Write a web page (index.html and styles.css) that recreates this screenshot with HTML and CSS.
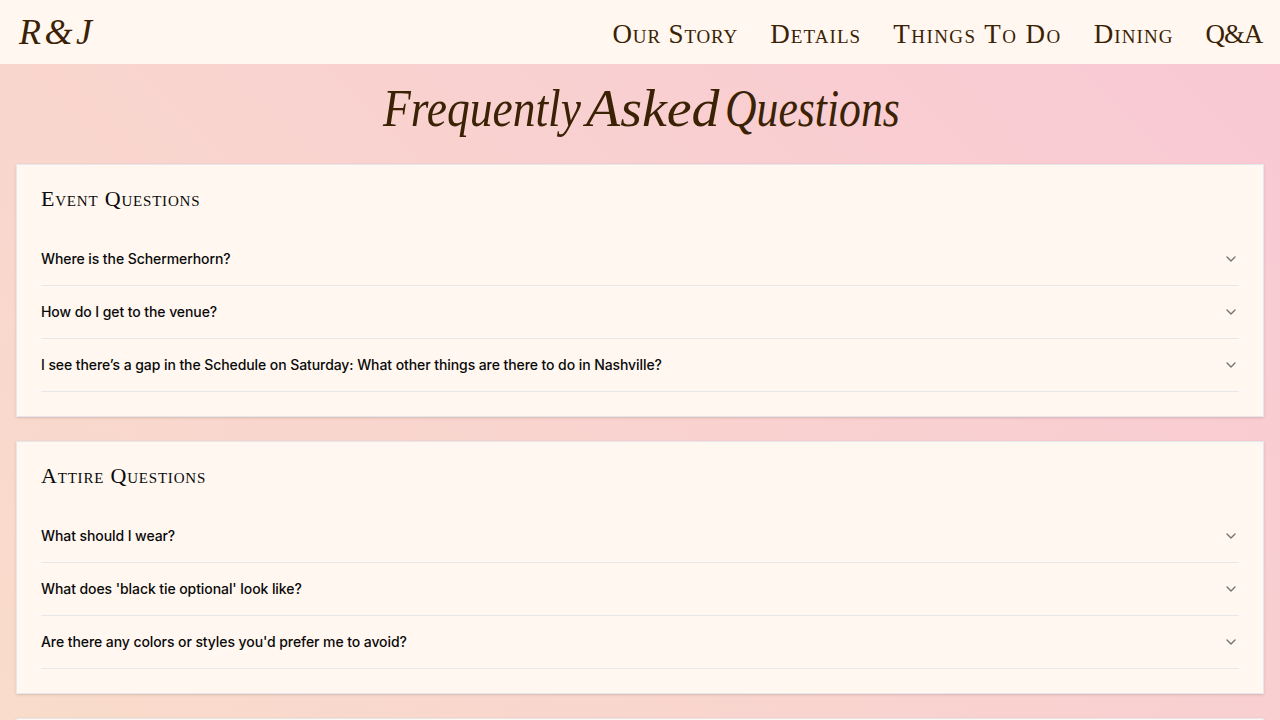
FILE: index.html
```html
<!DOCTYPE html>
<html lang="en">
<head>
<meta charset="utf-8">
<title>R&amp;J – Q&amp;A</title>
<link rel="stylesheet" href="styles.css">
</head>
<body>
<svg class="sprite" aria-hidden="true"><symbol id="chevron" viewBox="0 0 24 24"><path d="m6 9 6 6 6-6" fill="none" stroke="currentColor" stroke-width="2" stroke-linecap="round" stroke-linejoin="round"/></symbol></svg>
<header class="nav">
  <a class="logo">R&amp;J</a>
  <nav class="links">
    <a class="story">Our Story</a><a class="details">Details</a><a class="things">Things To Do</a><a class="dining">Dining</a><a class="qa">Q&amp;A</a>
  </nav>
</header>
<main>
  <h1 class="title"><span class="word w1">Frequently</span> <span class="word w2">Asked</span> <span class="word w3">Questions</span></h1>
  <section class="card">
    <h2 class="heading event">Event Questions</h2>
    <div class="item"><span>Where is the Schermerhorn?</span><svg class="chev"><use href="#chevron"/></svg></div>
    <div class="item"><span>How do I get to the venue?</span><svg class="chev"><use href="#chevron"/></svg></div>
    <div class="item"><span>I see there’s a gap in the Schedule on Saturday: What other things are there to do in Nashville?</span><svg class="chev"><use href="#chevron"/></svg></div>
  </section>
  <section class="card">
    <h2 class="heading attire">Attire Questions</h2>
    <div class="item"><span>What should I wear?</span><svg class="chev"><use href="#chevron"/></svg></div>
    <div class="item"><span>What does 'black tie optional' look like?</span><svg class="chev"><use href="#chevron"/></svg></div>
    <div class="item"><span>Are there any colors or styles you'd prefer me to avoid?</span><svg class="chev"><use href="#chevron"/></svg></div>
  </section>
  <section class="card"></section>
</main>
</body>
</html>
```
FILE: styles.css
```css
* { box-sizing: border-box; }
html { height: 100%; overflow: hidden; }
body { margin: 0; height: 720px; overflow: hidden; display: flex; flex-direction: column; background: linear-gradient(45deg, #f9dccb, #f9c8d4); font-family: Inter, sans-serif; color: #0a0a0a; }
main { flex: 1; min-height: 0; overflow: hidden; }
.sprite { display: none; }
.nav { flex: none; height: 64px; padding: 0 16px; display: flex; align-items: center; justify-content: space-between; background: #fff7f0; color: #3b2204; font-family: "Liberation Serif", serif; }
.logo { font-size: 36px; font-style: italic; padding-left: 3px; letter-spacing: 3.5px; }
.links { display: flex; gap: 32px; padding-top: 3px; font-size: 27px; line-height: 36px; font-variant: small-caps; white-space: nowrap; letter-spacing: 1.1px; }
.story { letter-spacing: .85px; }
.things { letter-spacing: 1.45px; }
.qa { letter-spacing: -1.2px; padding-right: 2px; }
.title { margin: 0; height: 100px; padding-top: 14px; display: flex; justify-content: center; color: #3b2204; font: italic 400 52px/62px "Liberation Serif", serif; white-space: nowrap; }
.word { transform-origin: left center; }
.w1 { width: 203px; transform: scaleX(.875); }
.w2 { width: 139px; transform: scaleX(1.075); }
.w3 { width: 173px; transform: scaleX(.84); }
.card { height: 253px; margin: 0 16px 24px; padding: 24px; background: #fff7f0; border: 1px solid #e5e7eb; box-shadow: 0 1px 3px rgba(0,0,0,.1), 0 1px 2px -1px rgba(0,0,0,.1); }
.heading { height: 24px; margin: 0 0 20px; font: 400 22px/20px "Liberation Serif", serif; font-variant: small-caps; letter-spacing: .8px; }
.item { height: 53px; display: flex; align-items: center; justify-content: space-between; border-bottom: 1px solid #e5e7eb; font-size: 14px; font-weight: 500; line-height: 20px; letter-spacing: -.08px; }
.chev { width: 16px; height: 16px; color: #737373; }
```
